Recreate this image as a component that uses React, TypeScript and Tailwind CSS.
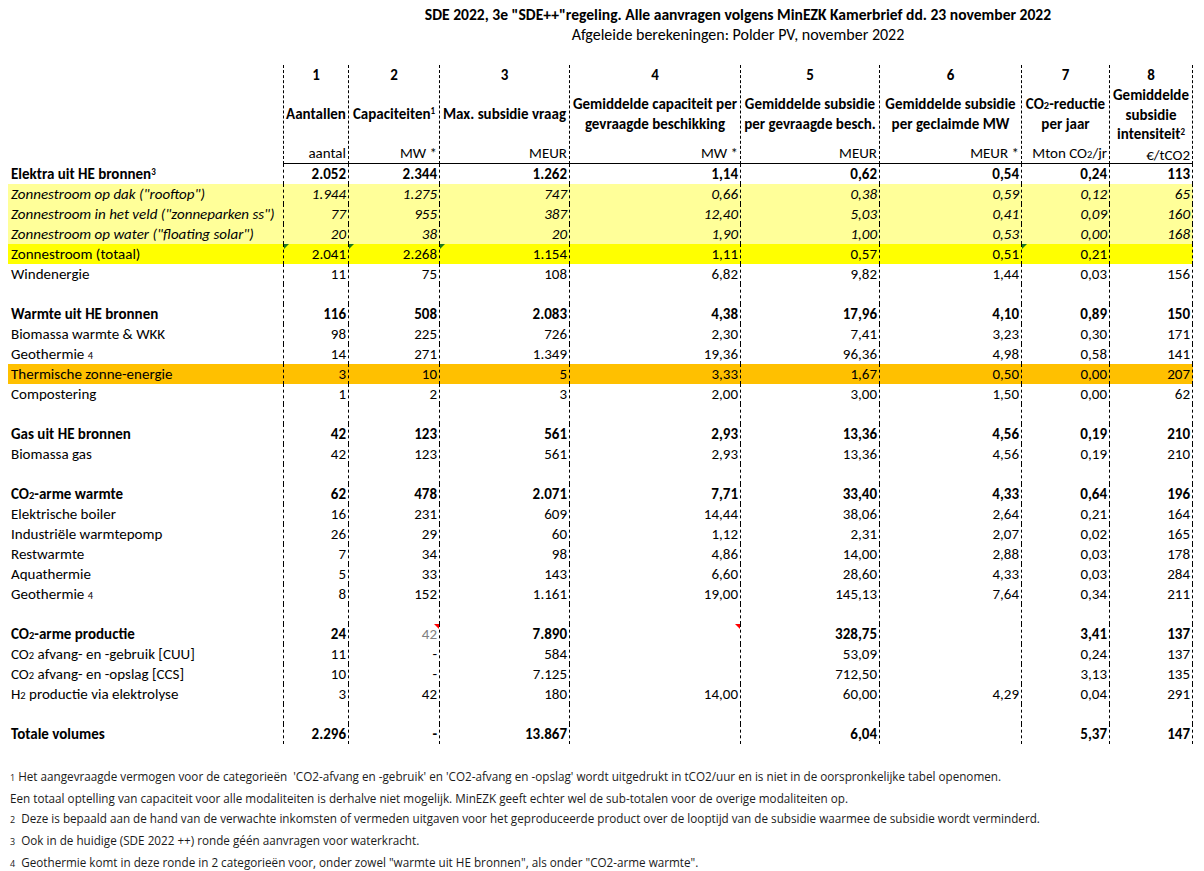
import React from 'react';

type Row = {
  label?: React.ReactNode;
  vals?: string[];
  bold?: boolean;
  italic?: boolean;
  bg?: string;
  marks?: boolean;
  note?: boolean;
};

const colW = ['w-[66px]', 'w-[91px]', 'w-[130px]', 'w-[171px]', 'w-[139px]', 'w-[142px]', 'w-[88px]', 'w-[83px]'];

const Small = ({ children }: { children: React.ReactNode }) => (
  <span className="text-[10.5px]">{children}</span>
);

const rows: Row[] = [
  { label: <>Elektra uit HE bronnen<sup className="text-[9px]">3</sup></>, vals: ['2.052', '2.344', '1.262', '1,14', '0,62', '0,54', '0,24', '113'], bold: true },
  { label: 'Zonnestroom op dak ("rooftop")', vals: ['1.944', '1.275', '747', '0,66', '0,38', '0,59', '0,12', '65'], italic: true, bg: 'bg-[#ffff99]' },
  { label: 'Zonnestroom in het veld ("zonneparken ss")', vals: ['77', '955', '387', '12,40', '5,03', '0,41', '0,09', '160'], italic: true, bg: 'bg-[#ffff99]' },
  { label: 'Zonnestroom op water ("floating solar")', vals: ['20', '38', '20', '1,90', '1,00', '0,53', '0,00', '168'], italic: true, bg: 'bg-[#ffff99]' },
  { label: 'Zonnestroom (totaal)', vals: ['2.041', '2.268', '1.154', '1,11', '0,57', '0,51', '0,21', ''], bg: 'bg-[#ffff00]', marks: true },
  { label: 'Windenergie', vals: ['11', '75', '108', '6,82', '9,82', '1,44', '0,03', '156'] },
  {},
  { label: 'Warmte uit HE bronnen', vals: ['116', '508', '2.083', '4,38', '17,96', '4,10', '0,89', '150'], bold: true },
  { label: 'Biomassa warmte & WKK', vals: ['98', '225', '726', '2,30', '7,41', '3,23', '0,30', '171'] },
  { label: <>Geothermie <Small>4</Small></>, vals: ['14', '271', '1.349', '19,36', '96,36', '4,98', '0,58', '141'] },
  { label: 'Thermische zonne-energie', vals: ['3', '10', '5', '3,33', '1,67', '0,50', '0,00', '207'], bg: 'bg-[#ffc000]' },
  { label: 'Compostering', vals: ['1', '2', '3', '2,00', '3,00', '1,50', '0,00', '62'] },
  {},
  { label: 'Gas uit HE bronnen', vals: ['42', '123', '561', '2,93', '13,36', '4,56', '0,19', '210'], bold: true },
  { label: 'Biomassa gas', vals: ['42', '123', '561', '2,93', '13,36', '4,56', '0,19', '210'] },
  {},
  { label: <>CO<Small>2</Small>-arme warmte</>, vals: ['62', '478', '2.071', '7,71', '33,40', '4,33', '0,64', '196'], bold: true },
  { label: 'Elektrische boiler', vals: ['16', '231', '609', '14,44', '38,06', '2,64', '0,21', '164'] },
  { label: 'Industriële warmtepomp', vals: ['26', '29', '60', '1,12', '2,31', '2,07', '0,02', '165'] },
  { label: 'Restwarmte', vals: ['7', '34', '98', '4,86', '14,00', '2,88', '0,03', '178'] },
  { label: 'Aquathermie', vals: ['5', '33', '143', '6,60', '28,60', '4,33', '0,03', '284'] },
  { label: <>Geothermie <Small>4</Small></>, vals: ['8', '152', '1.161', '19,00', '145,13', '7,64', '0,34', '211'] },
  {},
  { label: <>CO<Small>2</Small>-arme productie</>, vals: ['24', '42', '7.890', '', '328,75', '', '3,41', '137'], bold: true, note: true },
  { label: <>CO<Small>2</Small> afvang- en -gebruik [CUU]</>, vals: ['11', '-', '584', '', '53,09', '', '0,24', '137'] },
  { label: <>CO<Small>2</Small> afvang- en -opslag [CCS]</>, vals: ['10', '-', '7.125', '', '712,50', '', '3,13', '135'] },
  { label: <>H<Small>2</Small> productie via elektrolyse</>, vals: ['3', '42', '180', '14,00', '60,00', '4,29', '0,04', '291'] },
  {},
  { label: 'Totale volumes', vals: ['2.296', '-', '13.867', '', '6,04', '', '5,37', '147'], bold: true },
];

const headers: { n: string; label: React.ReactNode; unit: React.ReactNode }[] = [
  { n: '1', label: 'Aantallen', unit: 'aantal' },
  { n: '2', label: <>Capaciteiten<sup className="text-[9px]">1</sup></>, unit: 'MW *' },
  { n: '3', label: 'Max. subsidie vraag', unit: 'MEUR' },
  { n: '4', label: <>Gemiddelde capaciteit per<br />gevraagde beschikking</>, unit: 'MW *' },
  { n: '5', label: <>Gemiddelde subsidie<br />per gevraagde besch.</>, unit: 'MEUR' },
  { n: '6', label: <>Gemiddelde subsidie<br />per geclaimde MW</>, unit: 'MEUR *' },
  { n: '7', label: <>CO<Small>2</Small>-reductie<br />per jaar</>, unit: <>Mton CO<Small>2</Small>/jr</> },
  { n: '8', label: <>Gemiddelde<br />subsidie<br />intensiteit<sup className="text-[9px]">2</sup></>, unit: '€/tCO2' },
];

const GreenMark = () => (
  <span className="absolute left-0 top-0 w-0 h-0 border-t-[5px] border-r-[5px] border-t-[#1f7a1f] border-r-transparent" />
);
const RedMark = () => (
  <span className="absolute right-0 top-0 w-0 h-0 border-t-[5px] border-l-[5px] border-t-[#ff0000] border-l-transparent" />
);

const App = () => {
  return (
    <div className="w-[1204px] h-[871px] bg-white text-black overflow-hidden" style={{ fontFamily: 'Carlito, Lato, "Open Sans", sans-serif' }}>
      {/* Titles */}
      <div className="ml-[283px] w-[910px] pt-[5px] text-center">
        <div className="text-[15.6px] font-bold leading-[20px] whitespace-nowrap">
          SDE 2022, 3e "SDE++"regeling. Alle aanvragen volgens MinEZK Kamerbrief dd. 23 november 2022
        </div>
        <div className="text-[16px] leading-[20px]">Afgeleide berekeningen: Polder PV, november 2022</div>
      </div>

      {/* Header */}
      <div className="mt-[20px] flex text-[15px]">
        <div className="w-[283px] shrink-0" />
        {headers.map((h, i) => (
          <div
            key={h.n}
            className={`${colW[i]} shrink-0 h-[99px] flex flex-col border-r border-dashed border-r-black border-b border-b-black ${i === 0 ? 'border-l border-l-black' : ''}`}
            style={{ borderBottomStyle: 'solid' }}
          >
            <div className="h-[21px] leading-[21px] font-bold text-center">{h.n}</div>
            <div className="flex-1 flex items-center justify-center">
              <div className="text-center font-bold leading-[19.5px] whitespace-nowrap">{h.label}</div>
            </div>
            <div className="h-[20px] leading-[20px] text-right pr-[2px] whitespace-nowrap">{h.unit}</div>
          </div>
        ))}
      </div>

      {/* Body */}
      <div className="flex flex-col text-[15px]">
        {rows.map((r, ri) => (
          <div key={ri} className="flex h-[20px] leading-[20px]">
            <div className={`ml-[8px] w-[275px] shrink-0 pl-[3px] whitespace-nowrap ${r.bg ?? ''} ${r.bold ? 'font-bold' : ''} ${r.italic ? 'italic' : ''}`}>
              {r.label}
            </div>
            {colW.map((w, ci) => {
              const v = r.vals?.[ci] ?? '';
              const gray = r.note && ci === 1;
              return (
                <div
                  key={ci}
                  className={`${w} shrink-0 relative text-right pr-[2px] border-r border-dashed border-r-black ${ci === 0 ? 'border-l border-l-black' : ''} ${r.bg ?? ''} ${r.bold && !gray ? 'font-bold' : ''} ${r.italic ? 'italic' : ''} ${gray ? 'text-[#808080]' : ''}`}
                >
                  {r.marks && (ci === 0 || ci === 1 || ci === 2 || ci === 6) && <GreenMark />}
                  {r.note && (ci === 1 || ci === 3) && <RedMark />}
                  {v}
                </div>
              );
            })}
          </div>
        ))}
      </div>

      {/* Footnotes */}
      <div className="mt-[22px] pl-[10px] text-[11.7px] text-[#1a1a1a] leading-[20px]" style={{ fontFamily: '"Open Sans", "DejaVu Sans", sans-serif' }}>
        <div><span className="text-[9px]">1</span> Het aangevraagde vermogen voor de categorieën&nbsp; 'CO2-afvang en -gebruik' en 'CO2-afvang en -opslag' wordt uitgedrukt in tCO2/uur en is niet in de oorspronkelijke tabel openomen.</div>
        <div>Een totaal optelling van capaciteit voor alle modaliteiten is derhalve niet mogelijk. MinEZK geeft echter wel de sub-totalen voor de overige modaliteiten op.</div>
        <div><span className="text-[9px]">2</span>&nbsp; Deze is bepaald aan de hand van de verwachte inkomsten of vermeden uitgaven voor het geproduceerde product over de looptijd van de subsidie waarmee de subsidie wordt verminderd.</div>
        <div><span className="text-[9px]">3</span>&nbsp; Ook in de huidige (SDE 2022 ++) ronde géén aanvragen voor waterkracht.</div>
        <div><span className="text-[9px]">4</span>&nbsp; Geothermie komt in deze ronde in 2 categorieën voor, onder zowel "warmte uit HE bronnen", als onder "CO2-arme warmte".</div>
      </div>
    </div>
  );
};

export default App;
